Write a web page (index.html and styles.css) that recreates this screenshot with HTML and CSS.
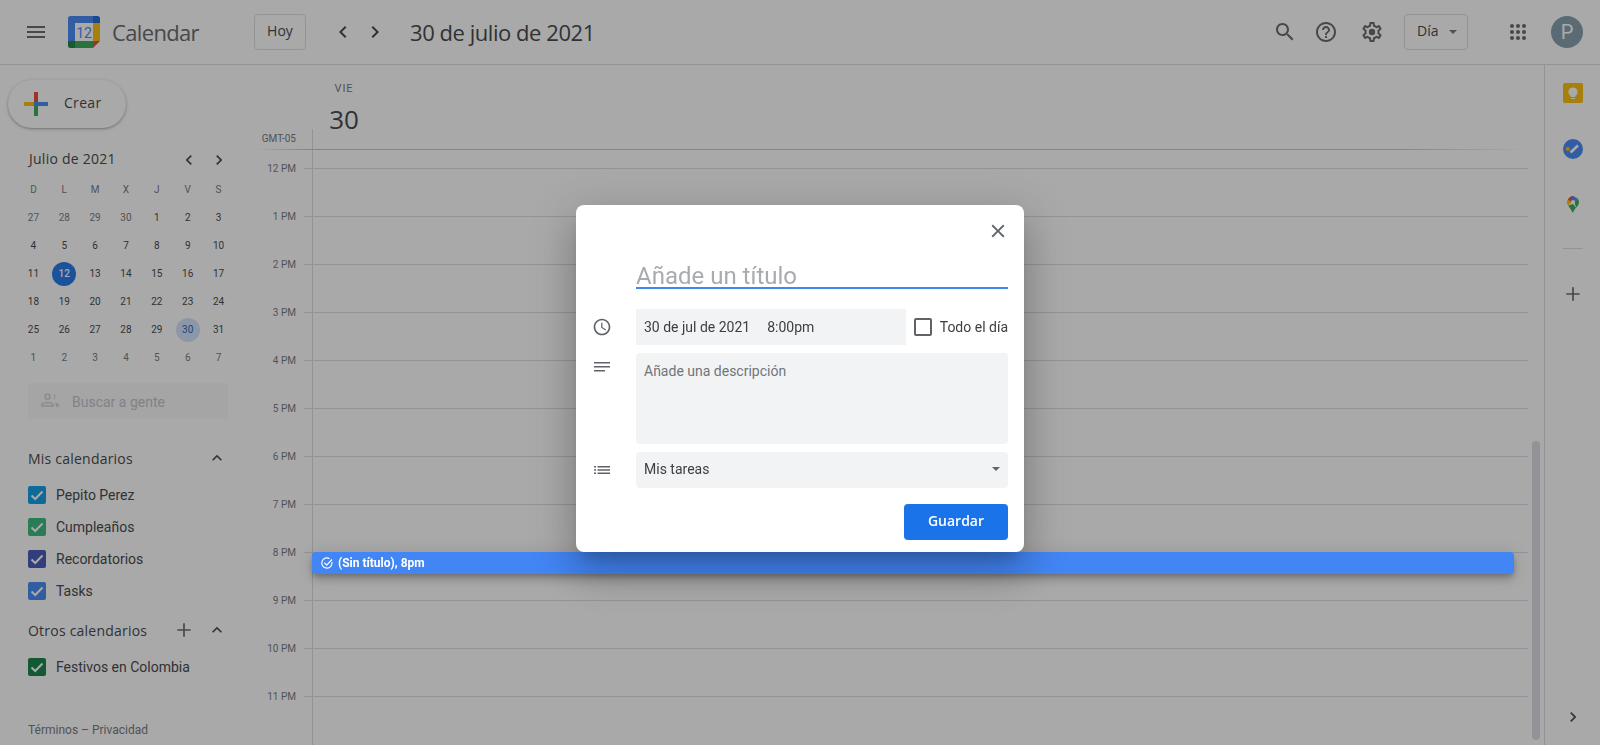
FILE: index.html
```html
<!DOCTYPE html>
<html lang="es">
<head>
<meta charset="utf-8">
<title>Calendar</title>
<link rel="stylesheet" href="styles.css">
</head>
<body>
<header class="topbar">
  <svg class="ic ic-menu" viewBox="0 0 24 24"><path d="M3 18h18v-2H3v2zm0-5h18v-2H3v2zm0-7v2h18V6H3z"/></svg>
  <svg class="logo" viewBox="0 0 32 32">
    <path fill="#fff" d="M7 7h18v18H7z"/>
    <path fill="#fbbc04" d="M25 7h7v18h-7z"/>
    <path fill="#34a853" d="M7 25h18v7H7z"/>
    <path fill="#4285f4" d="M2.500 0H25v7H7v18H0V2.500A2.500 2.500 0 0 1 2.500 0z"/>
    <path fill="#1967d2" d="M25 0h4.500A2.500 2.500 0 0 1 32 2.500V7h-7z"/>
    <path fill="#188038" d="M0 25h7v7H2.500A2.500 2.500 0 0 1 0 29.500z"/>
    <path fill="#ea4335" d="M25 25h7l-7 7z"/>
    <text class="logo-num" x="16" y="21.500" text-anchor="middle">12</text>
  </svg>
  <span class="brand">Calendar</span>
  <button class="btn-outline btn-today">Hoy</button>
  <svg class="ic ic-prev" viewBox="0 0 24 24"><path d="M15.410 7.410L14 6l-6 6 6 6 1.410-1.410L10.830 12z"/></svg>
  <svg class="ic ic-next" viewBox="0 0 24 24"><path d="M8.590 16.590L10 18l6-6-6-6-1.410 1.410L13.170 12z"/></svg>
  <h1 class="date-title">30 de julio de 2021</h1>
  <svg class="ic ic-search" viewBox="0 0 24 24"><path d="M15.500 14h-.79l-.28-.27C15.410 12.590 16 11.110 16 9.500 16 5.910 13.090 3 9.500 3S3 5.910 3 9.500 5.910 16 9.500 16c1.610 0 3.090-.59 4.230-1.570l.27.28v.79l5 4.990L20.490 19l-4.990-5zm-6 0C7.010 14 5 11.990 5 9.500S7.010 5 9.500 5 14 7.010 14 9.500 11.990 14 9.500 14z"/></svg>
  <svg class="ic ic-help" viewBox="0 0 24 24"><path d="M11 18h2v-2h-2v2zm1-16C6.480 2 2 6.480 2 12s4.480 10 10 10 10-4.480 10-10S17.520 2 12 2zm0 18c-4.410 0-8-3.590-8-8s3.590-8 8-8 8 3.590 8 8-3.590 8-8 8zm0-14c-2.210 0-4 1.790-4 4h2c0-1.100.9-2 2-2s2 .9 2 2c0 2-3 1.750-3 5h2c0-2.250 3-2.500 3-5 0-2.210-1.790-4-4-4z"/></svg>
  <svg class="ic ic-gear" viewBox="0 0 24 24"><path d="M19.430 12.980c.04-.32.07-.64.07-.98 0-.34-.03-.66-.07-.98l2.110-1.650c.19-.15.24-.42.12-.64l-2-3.460c-.09-.16-.26-.25-.44-.25-.06 0-.12.01-.17.03l-2.490 1c-.52-.4-1.080-.73-1.690-.98l-.38-2.650C14.460 2.180 14.250 2 14 2h-4c-.25 0-.46.18-.49.42l-.38 2.650c-.61.25-1.170.59-1.690.98l-2.490-1c-.06-.02-.12-.03-.18-.03-.17 0-.34.09-.43.25l-2 3.460c-.13.22-.07.49.12.64l2.110 1.650c-.04.32-.07.65-.07.98 0 .33.03.66.07.98l-2.110 1.650c-.19.15-.24.42-.12.64l2 3.460c.09.16.26.25.44.25.06 0 .12-.01.17-.03l2.490-1c.52.4 1.080.73 1.690.98l.38 2.650c.03.24.24.42.49.42h4c.25 0 .46-.18.49-.42l.38-2.650c.61-.25 1.170-.59 1.690-.98l2.490 1c.06.02.12.03.18.03.17 0 .34-.09.43-.25l2-3.460c.12-.22.07-.49-.12-.64l-2.110-1.650zm-1.980-1.710c.04.31.05.52.05.73 0 .21-.02.43-.05.73l-.14 1.130.89.7 1.080.84-.7 1.210-1.270-.51-1.040-.42-.9.68c-.43.32-.84.56-1.250.73l-1.060.43-.16 1.130-.2 1.350h-1.400l-.19-1.350-.16-1.130-1.060-.43c-.43-.18-.83-.41-1.230-.71l-.91-.7-1.060.43-1.270.51-.7-1.210 1.080-.84.89-.7-.14-1.130c-.03-.31-.05-.54-.05-.74s.02-.43.05-.73l.14-1.130-.89-.7-1.080-.84.7-1.210 1.270.51 1.040.42.9-.68c.43-.32.84-.56 1.250-.73l1.060-.43.16-1.130.2-1.350h1.390l.19 1.350.16 1.130 1.060.43c.43.18.83.41 1.230.71l.91.7 1.060-.43 1.270-.51.7 1.210-1.070.85-.89.7.14 1.130z"/><circle cx="12" cy="12" r="3.200"/></svg>
  <button class="btn-outline btn-view">Día<span class="caret"></span></button>
  <svg class="ic ic-apps" viewBox="0 0 16 16"><g><circle cx="2" cy="2" r="2"/><circle cx="8" cy="2" r="2"/><circle cx="14" cy="2" r="2"/><circle cx="2" cy="8" r="2"/><circle cx="8" cy="8" r="2"/><circle cx="14" cy="8" r="2"/><circle cx="2" cy="14" r="2"/><circle cx="8" cy="14" r="2"/><circle cx="14" cy="14" r="2"/></g></svg>
  <div class="avatar">P</div>
</header>

<div class="main">
  <aside class="sidebar">
    <button class="create">
      <svg class="create-plus" viewBox="0 0 24 24">
        <path fill="#ea4335" d="M10 0h4v10h-4z"/>
        <path fill="#4285f4" d="M10 10h14v4H10z"/>
        <path fill="#34a853" d="M10 14h4v10h-4z"/>
        <path fill="#fbbc04" d="M0 10h10v4H0z"/>
      </svg>
      <span>Crear</span>
    </button>

    <div class="month-head">
      <span class="month-name">Julio de 2021</span>
      <svg class="ic-sm" viewBox="0 0 24 24"><path d="M15.410 7.410L14 6l-6 6 6 6 1.410-1.410L10.830 12z"/></svg>
      <svg class="ic-sm" viewBox="0 0 24 24"><path d="M8.590 16.590L10 18l6-6-6-6-1.410 1.410L13.170 12z"/></svg>
    </div>

    <div class="mini">
      <span class="dow">D</span><span class="dow">L</span><span class="dow">M</span><span class="dow">X</span><span class="dow">J</span><span class="dow">V</span><span class="dow">S</span>
      <span class="d off">27</span><span class="d off">28</span><span class="d off">29</span><span class="d off">30</span><span class="d">1</span><span class="d">2</span><span class="d">3</span>
      <span class="d">4</span><span class="d">5</span><span class="d">6</span><span class="d">7</span><span class="d">8</span><span class="d">9</span><span class="d">10</span>
      <span class="d">11</span><span class="d today">12</span><span class="d">13</span><span class="d">14</span><span class="d">15</span><span class="d">16</span><span class="d">17</span>
      <span class="d">18</span><span class="d">19</span><span class="d">20</span><span class="d">21</span><span class="d">22</span><span class="d">23</span><span class="d">24</span>
      <span class="d">25</span><span class="d">26</span><span class="d">27</span><span class="d">28</span><span class="d">29</span><span class="d sel">30</span><span class="d">31</span>
      <span class="d off">1</span><span class="d off">2</span><span class="d off">3</span><span class="d off">4</span><span class="d off">5</span><span class="d off">6</span><span class="d off">7</span>
    </div>

    <div class="people">
      <svg class="people-ic" viewBox="0 0 24 24"><path d="M9 12a4 4 0 1 0 0-8 4 4 0 0 0 0 8zm0-6a2 2 0 1 1 0 4 2 2 0 0 1 0-4zm0 8c-2.700 0-8 1.300-8 4v2h16v-2c0-2.700-5.300-4-8-4zm-6 4c.2-.7 3.300-2 6-2s5.800 1.300 6 2H3zM15.500 4.100a4 4 0 0 1 0 7.800 6 6 0 0 0 0-7.800zM18 14.300c1.900.7 5 1.800 5 3.700v2h-4v-2c0-1.500-.4-2.700-1-3.700z"/></svg>
      <span>Buscar a gente</span>
    </div>

    <div class="cal-head cal-head-mine">
      <span class="cal-title">Mis calendarios</span>
      <svg class="ic-sm chev-up" viewBox="0 0 24 24"><path d="M7.410 15.410L12 10.830l4.590 4.580L18 14l-6-6-6 6z"/></svg>
    </div>
    <ul class="cal-list">
      <li class="cal-item"><span class="cb cb-blue"><svg viewBox="0 0 18 18"><path d="M3.500 9.500l3.700 3.500 7.300-7.500"/></svg></span>Pepito Perez</li>
      <li class="cal-item"><span class="cb cb-green"><svg viewBox="0 0 18 18"><path d="M3.500 9.500l3.700 3.500 7.300-7.500"/></svg></span>Cumpleaños</li>
      <li class="cal-item"><span class="cb cb-indigo"><svg viewBox="0 0 18 18"><path d="M3.500 9.500l3.700 3.500 7.300-7.500"/></svg></span>Recordatorios</li>
      <li class="cal-item"><span class="cb cb-tasks"><svg viewBox="0 0 18 18"><path d="M3.500 9.500l3.700 3.500 7.300-7.500"/></svg></span>Tasks</li>
    </ul>
    <div class="cal-head cal-head-other">
      <span class="cal-title">Otros calendarios</span>
      <svg class="ic-plus" viewBox="0 0 24 24"><path d="M20 13h-7v7h-2v-7H4v-2h7V4h2v7h7z"/></svg>
      <svg class="ic-sm chev-up" viewBox="0 0 24 24"><path d="M7.410 15.410L12 10.830l4.590 4.580L18 14l-6-6-6 6z"/></svg>
    </div>
    <ul class="cal-list">
      <li class="cal-item"><span class="cb cb-forest"><svg viewBox="0 0 18 18"><path d="M3.500 9.500l3.700 3.500 7.300-7.500"/></svg></span>Festivos en Colombia</li>
    </ul>
    <div class="terms">Términos – Privacidad</div>
  </aside>

  <section class="day">
    <div class="day-head">
      <div class="day-col">
        <span class="day-name">VIE</span>
        <span class="day-num">30</span>
      </div>
      <span class="gmt">GMT-05</span>
    </div>
    <div class="hours">
      <div class="hour"><span class="hlabel">12 PM</span><span class="hline"></span></div>
      <div class="hour"><span class="hlabel">1 PM</span><span class="hline"></span></div>
      <div class="hour"><span class="hlabel">2 PM</span><span class="hline"></span></div>
      <div class="hour"><span class="hlabel">3 PM</span><span class="hline"></span></div>
      <div class="hour"><span class="hlabel">4 PM</span><span class="hline"></span></div>
      <div class="hour"><span class="hlabel">5 PM</span><span class="hline"></span></div>
      <div class="hour"><span class="hlabel">6 PM</span><span class="hline"></span></div>
      <div class="hour"><span class="hlabel">7 PM</span><span class="hline"></span></div>
      <div class="hour"><span class="hlabel">8 PM</span><span class="hline"></span></div>
      <div class="hour"><span class="hlabel">9 PM</span><span class="hline"></span></div>
      <div class="hour"><span class="hlabel">10 PM</span><span class="hline"></span></div>
      <div class="hour"><span class="hlabel">11 PM</span><span class="hline"></span></div>
    </div>
    <div class="scroll-thumb"></div>
  </section>

  <aside class="addons">
    <svg class="addon" viewBox="0 0 20 20">
      <rect width="20" height="20" rx="2" fill="#fbbc04"/>
      <path fill="#fff" d="M10 4.500a4.500 4.500 0 0 0-2.300 8.400V14h4.600v-1.100A4.500 4.500 0 0 0 10 4.500zM8 15h4v1H8z"/>
    </svg>
    <svg class="addon" viewBox="0 0 20 20">
      <circle cx="10" cy="10" r="10" fill="#4285f4"/>
      <path d="M7.500 13.500l7.500-7" stroke="#fff" stroke-width="2.600" fill="none"/>
      <circle cx="4.800" cy="10" r="2" fill="#fbbc04"/>
    </svg>
    <svg class="addon addon-map" viewBox="0 0 12 17">
      <path fill="#34a853" d="M1.200 9.500L6 17c.5-2 1.600-3.500 3-5.200L6 8z"/>
      <path fill="#fbbc04" d="M.8 3.800C.3 4.500 0 5.200 0 6c0 1.400.5 2.500 1.200 3.500L4.500 6z"/>
      <path fill="#ea4335" d="M.8 3.800L4.500 6 8 2 6 0C3.800 0 2 1.400.8 3.800z"/>
      <path fill="#4285f4" d="M6 0l4.800 2.500L7.500 6 4 3z"/>
      <path fill="#34a853" d="M10.800 2.500C11.600 3.500 12 4.700 12 6c0 2.400-1.500 4.200-3 5.800L7.500 6z"/>
      <circle cx="6" cy="6" r="2" fill="#fff"/>
    </svg>
    <span class="addon-sep"></span>
    <svg class="addon-add" viewBox="0 0 24 24"><path d="M20 13h-7v7h-2v-7H4v-2h7V4h2v7h7z"/></svg>
    <svg class="addon-expand" viewBox="0 0 24 24"><path d="M8.590 16.590L10 18l6-6-6-6-1.410 1.410L13.170 12z"/></svg>
  </aside>
</div>

<div class="scrim"></div>

<div class="event">
  <svg class="event-ic" viewBox="0 0 24 24"><path d="M20.500 10.200A8.800 8.800 0 1 1 16.600 4.500" fill="none" stroke="#fff" stroke-width="2"/><path d="M7.500 11.500l4 4 9-9.500" fill="none" stroke="#fff" stroke-width="2"/></svg>
  <span>(Sin título), 8pm</span>
</div>

<div class="dialog">
  <div class="dlg-close">
    <svg class="dlg-x" viewBox="0 0 24 24"><path d="M19 6.410L17.590 5 12 10.590 6.410 5 5 6.410 10.590 12 5 17.590 6.410 19 12 13.410 17.590 19 19 17.590 13.410 12z"/></svg>
  </div>
  <div class="dlg-row">
    <span class="dlg-ic"></span>
    <div class="dlg-title">Añade un título</div>
  </div>
  <div class="dlg-row dlg-row-date">
    <svg class="dlg-ic" viewBox="0 0 24 24"><path d="M11.990 2C6.470 2 2 6.480 2 12s4.470 10 9.990 10C17.520 22 22 17.520 22 12S17.520 2 11.990 2zM12 20c-4.420 0-8-3.580-8-8s3.580-8 8-8 8 3.580 8 8-3.580 8-8 8zm.5-13H11v6l5.250 3.150.75-1.230-4.500-2.670z"/></svg>
    <div class="dlg-date"><span>30 de jul de 2021</span><span>8:00pm</span></div>
    <span class="allday-box"></span>
    <span class="allday-label">Todo el día</span>
  </div>
  <div class="dlg-row dlg-row-desc">
    <svg class="dlg-ic dlg-ic-top" viewBox="0 0 20 20"><path d="M2 3h16v1.500H2zM2 7h16v1.500H2zM2 11h11v1.500H2z"/></svg>
    <div class="dlg-desc">Añade una descripción</div>
  </div>
  <div class="dlg-row dlg-row-sel">
    <svg class="dlg-ic" viewBox="0 0 20 20"><path d="M2 6h2v1.500H2zM5.500 6H18v1.500H5.500zM2 9.300h2v1.500H2zM5.500 9.300H18v1.500H5.500zM2 12.600h2v1.500H2zM5.500 12.600H18v1.500H5.500z"/></svg>
    <div class="dlg-select"><span>Mis tareas</span><span class="sel-caret"></span></div>
  </div>
  <div class="dlg-foot"><button class="save">Guardar</button></div>
</div>
</body>
</html>
```

FILE: styles.css
```css
* { box-sizing: border-box; }
html, body { margin: 0; height: 100%; }
body {
  width: 1600px;
  height: 745px;
  overflow: hidden;
  background: #fff;
  font-family: Roboto, "Liberation Sans", sans-serif;
  color: #3c4043;
}
button { font: inherit; color: inherit; background: none; padding: 0; }
ul { list-style: none; margin: 0; padding: 0; }
svg { display: block; fill: #5f6368; flex: none; }

.topbar {
  height: 65px;
  display: flex;
  align-items: center;
  border-bottom: 1px solid #dadce0;
}
.ic { width: 24px; height: 24px; }
.ic-menu { margin-left: 24px; }
.logo { width: 32px; height: 32px; margin-left: 20px; }
.logo-num { font: 400 14px Roboto, sans-serif; fill: #4285f4; }
.brand {
  margin-left: 12px;
  width: 142px;
  font: 400 22px "Open Sans", sans-serif;
  color: #5f6368;
  letter-spacing: -0.65px;
}
.btn-outline {
  height: 36px;
  border: 1px solid #dadce0;
  border-radius: 4px;
  font: 500 14px "Open Sans", sans-serif;
  color: #3c4043;
  display: flex;
  align-items: center;
  padding-bottom: 3px;
}
.btn-today { width: 52px; justify-content: center; }
.ic-prev { margin-left: 25px; fill: #3c4043; }
.ic-next { margin-left: 8px; fill: #3c4043; }
.date-title {
  margin: 0 0 0 23px;
  width: 863px;
  font: 400 22px "Open Sans", sans-serif;
  color: #3c4043;
  letter-spacing: -0.45px;
}
.ic-help { margin-left: 17px; }
.ic-gear { margin-left: 22px; }
.btn-view { margin-left: 20px; width: 64px; padding-left: 12px; }
.caret {
  margin-left: 11px;
  margin-top: 3px;
  border: 4px solid transparent;
  border-top-color: #70757a;
  border-bottom-width: 0;
}
.ic-apps { width: 16px; height: 16px; margin-left: 42px; }
.avatar {
  width: 32px; height: 32px;
  margin-left: 25px;
  border-radius: 50%;
  background: #829bab;
  color: #fff;
  font: 400 20px/32px Roboto, sans-serif;
  text-align: center;
}

.main { display: flex; height: 680px; }

.sidebar {
  width: 256px;
  flex: none;
  display: flex;
  flex-direction: column;
  padding-left: 28px;
  padding-bottom: 7px;
}
.create {
  width: 118px;
  height: 48px;
  margin: 15px 0 0 -20px;
  border: 0;
  border-radius: 24px;
  background: #fff;
  box-shadow: 0 1px 2px rgba(60,64,67,.3), 0 1px 3px 1px rgba(60,64,67,.15);
  display: flex;
  align-items: center;
  font: 500 14px "Open Sans", sans-serif;
  letter-spacing: .3px;
  color: #3c4043;
}
.create span { margin-bottom: 3px; }
.create-plus { width: 24px; height: 24px; margin: 0 16px; }
.month-head {
  margin-top: 20px;
  width: 201px;
  height: 24px;
  display: flex;
  align-items: center;
}
.month-name {
  font: 500 14px "Open Sans", sans-serif;
  letter-spacing: .25px;
  flex: 1;
  color: #3c4043;
  padding: 0 0 3px 1px;
}
.ic-sm { width: 20px; height: 20px; fill: #3c4043; }
.month-head .ic-sm + .ic-sm { margin-left: 10px; }
.mini {
  margin: 4px 0 0 -10px;
  width: 216px;
  display: grid;
  grid-template-columns: repeat(7, 1fr);
  grid-auto-rows: 28px;
  justify-items: center;
  align-items: center;
  font: 400 10px Roboto, sans-serif;
}
.dow { color: #70757a; margin-top: -1px; }
.d {
  width: 24px; height: 24px;
  border-radius: 50%;
  text-align: center;
  line-height: 24px;
  color: #3c4043;
}
.off { color: #70757a; }
.today { background: #1a73e8; color: #fff; font-weight: 500; }
.sel { background: #d2e3fc; color: #185abc; }

.people {
  margin-top: 11px;
  width: 200px;
  height: 36px;
  background: #f8f9fa;
  border-radius: 4px;
  display: flex;
  align-items: center;
  padding: 2px 0 0 12px;
  font-size: 14px;
  color: #bdc1c6;
}
.people-ic { width: 20px; height: 20px; fill: #d0d3d7; margin: -4px 12px 0 0; }

.cal-head {
  height: 32px;
  width: 200px;
  display: flex;
  align-items: center;
}
.cal-head-mine { margin-top: 23px; }
.cal-head-other { margin-top: 7px; }
.cal-title {
  flex: 1;
  padding-top: 1px;
  font: 500 14px "Open Sans", sans-serif;
  letter-spacing: .22px;
  color: #3c4043;
}
.chev-up { margin-right: 1px; }
.ic-plus { width: 20px; height: 20px; margin-right: 13px; }
.cal-list { margin-top: 5px; }
.cal-item {
  height: 32px;
  display: flex;
  align-items: center;
  font-size: 14px;
  color: #3c4043;
}
.cb {
  width: 18px; height: 18px;
  border-radius: 2px;
  margin-right: 10px;
}
.cb svg { width: 18px; height: 18px; fill: none; stroke: #fff; stroke-width: 2; }
.cb-blue { background: #039be5; }
.cb-green { background: #33b679; }
.cb-indigo { background: #3f51b5; }
.cb-tasks { background: #4285f4; }
.cb-forest { background: #0b8043; }
.terms { margin-top: auto; font-size: 12px; line-height: 16px; color: #70757a; }

.day { flex: 1; position: relative; overflow: hidden; }
.day-head {
  height: 85px;
  position: relative;
  display: flex;
  padding-left: 56px;
}
.day-head::after {
  content: "";
  position: absolute;
  left: 0; right: 16px; bottom: 0;
  height: 1px;
  background: linear-gradient(to right, transparent, #c4c6ca 48px, #c4c6ca 90%, transparent);
}
.day-head::before {
  content: "";
  position: absolute;
  left: 56px; top: 64px; bottom: 0;
  width: 1px;
  background: #dadce0;
}
.day-col {
  width: 64px;
  display: flex;
  flex-direction: column;
  align-items: center;
}
.day-name {
  margin-top: 17px;
  font: 400 11px/14px Roboto, sans-serif;
  letter-spacing: .9px;
  color: #70757a;
}
.day-num {
  margin-top: 9px;
  font: 400 26px/28px "Open Sans", sans-serif;
  color: #3c4043;
}
.gmt {
  position: absolute;
  right: calc(100% - 40px);
  top: 68px;
  font: 400 10px/12px Roboto, sans-serif;
  color: #70757a;
}
.hours { margin-top: -6px; position: relative; }
.hours::before {
  content: "";
  position: absolute;
  left: 56px; top: 6px; bottom: -60px;
  width: 1px;
  background: #dadce0;
}
.hour {
  height: 48px;
  display: flex;
  align-items: center;
  padding-right: 16px;
}
.hlabel {
  width: 40px;
  margin-top: 2px;
  text-align: right;
  font: 400 10px/12px Roboto, sans-serif;
  color: #70757a;
}
.hline { flex: 1; height: 1px; margin-left: 8px; background: #dadce0; }
.scroll-thumb {
  position: absolute;
  right: 4px;
  top: 376px;
  width: 8px;
  height: 299px;
  border-radius: 4px;
  background: #dadce0;
}

.addons {
  width: 56px;
  flex: none;
  border-left: 1px solid #dadce0;
  display: flex;
  flex-direction: column;
  align-items: center;
  padding-top: 18px;
}
.addon { width: 20px; height: 20px; margin-bottom: 36px; }
.addon-map { width: 12px; height: 17px; margin-top: 1px; margin-bottom: 0; }
.addon-sep { width: 20px; height: 1px; background: #dadce0; margin-top: 35px; }
.addon-add { width: 20px; height: 20px; margin-top: 35px; }
.addon-expand { width: 20px; height: 20px; margin-top: auto; margin-bottom: 18px; fill: #3c4043; }

.scrim {
  position: fixed;
  inset: 0;
  background: rgba(28,28,28,.38);
}
.event {
  position: absolute;
  left: 312px; top: 552px;
  width: 1202px; height: 22px;
  border-radius: 4px;
  background: #4285f4;
  box-shadow: 0 6px 10px rgba(0,0,0,.14), 0 1px 18px rgba(0,0,0,.12), 0 3px 5px -1px rgba(0,0,0,.2);
  display: flex;
  align-items: center;
  padding-left: 8px;
  font: 700 12px Roboto, sans-serif;
  color: #fff;
}
.event-ic { width: 14px; height: 14px; margin-right: 4px; }

.dialog {
  position: absolute;
  left: 576px; top: 205px;
  width: 448px; height: 347px;
  border-radius: 8px;
  background: #fff;
  padding: 0 16px;
  box-shadow: 0 24px 38px 3px rgba(0,0,0,.14), 0 9px 46px 8px rgba(0,0,0,.12), 0 11px 15px -7px rgba(0,0,0,.2);
}
.dlg-close { height: 50px; display: flex; justify-content: flex-end; padding-top: 15px; }
.dlg-x { width: 22px; height: 22px; margin-right: -1px; }
.dlg-row { display: flex; align-items: center; }
.dlg-ic { width: 20px; height: 20px; margin-right: 24px; flex: none; }
.dlg-ic-top { align-self: flex-start; margin-top: 6px; }
.dlg-title {
  flex: 1;
  height: 34px;
  border-bottom: 2px solid #4285f4;
  font: 400 24px/43px Roboto, sans-serif;
  color: #a8abaf;
  white-space: nowrap;
}
.dlg-row-date { margin-top: 20px; height: 36px; font-size: 14px; }
.dlg-date {
  width: 270px;
  height: 36px;
  background: #f1f3f4;
  display: flex;
  align-items: center;
  gap: 17px;
  padding-left: 8px;
}
.allday-box {
  width: 18px; height: 18px;
  margin: 0 8px;
  border: 2px solid #5f6368;
  border-radius: 2px;
}
.allday-label { white-space: nowrap; color: #3c4043; }
.dlg-row-desc { margin-top: 8px; }
.dlg-desc {
  flex: 1;
  height: 91px;
  background: #f1f3f4;
  border-radius: 4px;
  padding: 10px 8px;
  font-size: 14px;
  line-height: 16px;
  color: #70757a;
}
.dlg-row-sel { margin-top: 8px; }
.dlg-select {
  flex: 1;
  height: 36px;
  background: #f1f3f4;
  border-radius: 4px;
  padding: 0 8px 2px;
  display: flex;
  align-items: center;
  justify-content: space-between;
  font-size: 14px;
}
.sel-caret {
  border: 4px solid transparent;
  border-top: 4px solid #5f6368;
  border-bottom-width: 0;
}
.dlg-foot { margin-top: 16px; display: flex; justify-content: flex-end; }
.save {
  width: 104px;
  height: 36px;
  border: 0;
  border-radius: 4px;
  background: #1a73e8;
  color: #fff;
  font: 600 14px "Open Sans", sans-serif;
  padding-bottom: 3px;
}
```
